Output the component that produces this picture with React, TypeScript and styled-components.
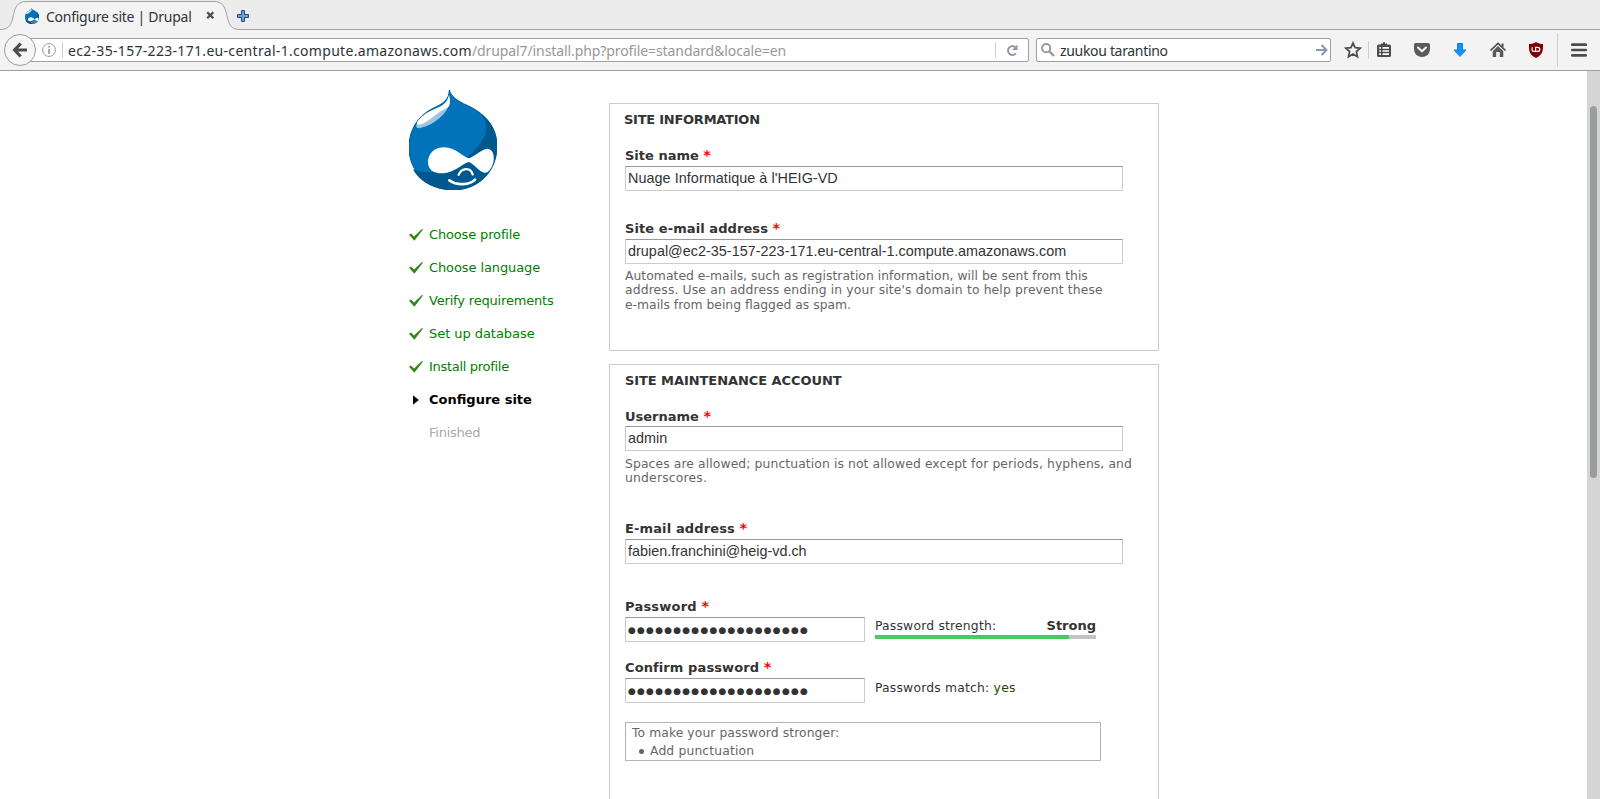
import React from "react";
import styled, { createGlobalStyle } from "styled-components";

const GlobalStyle = createGlobalStyle`
  * { box-sizing: border-box; }
  html, body { margin: 0; padding: 0; background: #fff; overflow: hidden; }
`;

const uiFont = `"Noto Sans", "Open Sans", sans-serif`;
const pageFont = `"DejaVu Sans", Verdana, sans-serif`;
const inputFont = `"Liberation Sans", Arial, sans-serif`;

const Window = styled.div`
  width: 1600px;
  height: 799px;
  display: flex;
  flex-direction: column;
  overflow: hidden;
  background: #fff;
`;

/* Browser chrome */
const TabStrip = styled.div`
  height: 30px;
  flex: none;
  display: flex;
  background: #ececec;
  box-shadow: inset 0 -1px 0 #9f9fa1;
`;
const Tab = styled.div`
  position: relative;
  width: 237px;
  height: 30px;
  display: flex;
  align-items: center;
  padding: 3px 0 0 25px;
  font: 14px/20px ${uiFont};
  color: #2e3436;
`;
const TabShape = styled.svg`
  position: absolute;
  left: 0;
  top: 0;
`;
const Favicon = styled.span`
  position: relative;
  display: flex;
  width: 14px;
  margin: -2px 7px 0 0;
`;
const TabTitle = styled.span<{ $track?: number }>`
  position: relative;
  width: 160px;
  white-space: nowrap;
  letter-spacing: ${(p) => p.$track ?? 0}px;
`;
const TabClose = styled.svg`
  position: relative;
  margin-top: -2px;
`;
const NewTab = styled.svg`
  margin-top: 10px;
`;

const NavBar = styled.div`
  height: 41px;
  flex: none;
  display: flex;
  align-items: center;
  background: #f3f3f3;
  border-bottom: 1px solid #9f9fa1;
  padding: 0 12px 0 4px;
`;
const BackButton = styled.div`
  position: relative;
  width: 32px;
  height: 32px;
  flex: none;
  display: flex;
  align-items: center;
  justify-content: center;
  border: 1px solid #9c9c9c;
  border-radius: 50%;
  background: #f6f6f6;
`;
const Field = styled.div<{ $w: number; $joined?: boolean }>`
  width: ${(p) => p.$w}px;
  height: 24px;
  flex: none;
  display: flex;
  align-items: center;
  margin-left: ${(p) => (p.$joined ? -8 : 7)}px;
  border: 1px solid #a0a0a2;
  border-radius: 2px;
  background: #fff;
  padding-left: ${(p) => (p.$joined ? 13 : 4)}px;
  font: 14px/22px ${uiFont};
  color: #2e3436;
`;
const FieldText = styled.span<{ $track: number }>`
  flex: 1;
  white-space: nowrap;
  padding-top: 2px;
  letter-spacing: ${(p) => p.$track}px;
`;
const Dim = styled.span<{ $track: number }>`
  color: #989898;
  letter-spacing: ${(p) => p.$track}px;
`;
const Rule = styled.i<{ $h: number; $l: number; $r: number }>`
  width: 1px;
  height: ${(p) => p.$h}px;
  flex: none;
  background: #d0d0d0;
  margin: 0 ${(p) => p.$r}px 0 ${(p) => p.$l}px;
`;
const FieldIcon = styled.svg<{ $after: number }>`
  flex: none;
  margin-right: ${(p) => p.$after}px;
`;
const Tools = styled.div`
  flex: 1;
  display: flex;
  align-items: center;
  padding-left: 13px;
`;
const ToolSlot = styled.span<{ $w: number }>`
  display: flex;
  width: ${(p) => p.$w}px;
  height: 18px;
  flex: none;
`;

/* Page */
const Viewport = styled.div`
  flex: 1;
  min-height: 0;
  display: flex;
  justify-content: space-between;
  font: 13px/20px ${pageFont};
  color: #333;
`;
const Page = styled.div`
  display: flex;
  padding-left: 409px;
`;
const Sidebar = styled.div`
  width: 200px;
  padding-top: 19px;
`;
const TaskList = styled.ul`
  list-style: none;
  margin: 28px 0 0;
  padding: 0;
`;
const Task = styled.li<{ $state: "done" | "active" | "todo"; $track: number }>`
  height: 33px;
  display: flex;
  align-items: center;
  white-space: nowrap;
  letter-spacing: ${(p) => p.$track}px;
  color: ${(p) => ({ done: "#008000", active: "#000", todo: "#aaa" })[p.$state]};
  font-weight: ${(p) => (p.$state === "active" ? 700 : 400)};
`;
const TaskMark = styled.span`
  display: flex;
  width: 20px;
  height: 14px;
  flex: none;
`;
const Main = styled.div`
  width: 550px;
  padding-top: 32px;
  height: 728px;
  overflow: hidden;
`;
const Fieldset = styled.section<{ $h: number }>`
  height: ${(p) => p.$h}px;
  margin-bottom: 13px;
  border: 1px solid #ccc;
  padding: 6px 15px 0;
`;
const Legend = styled.h2<{ $track: number; $shift?: number }>`
  margin: 0 0 16px ${(p) => p.$shift ?? 0}px;
  font: 700 13px/20px ${pageFont};
  text-transform: uppercase;
  white-space: nowrap;
  letter-spacing: ${(p) => p.$track}px;
`;
const FormItem = styled.div<{ $h: number }>`
  height: ${(p) => p.$h}px;
`;
const Label = styled.div<{ $track: number; $h: number }>`
  height: ${(p) => p.$h}px;
  font-weight: 700;
  white-space: nowrap;
  letter-spacing: ${(p) => p.$track}px;
`;
const Star = styled.span`
  color: #f00;
  font-size: 14.5px;
  line-height: 1;
`;
const Input = styled.div<{ $w?: number; $track: number }>`
  width: ${(p) => p.$w ?? 498}px;
  height: 25px;
  border: 1px solid #ccc;
  border-top-color: #999;
  padding-left: 2px;
  font: 14.4px/23px ${inputFont};
  color: #333;
  white-space: nowrap;
  letter-spacing: ${(p) => p.$track}px;
`;
const Dots = styled.span`
  display: block;
  font: 9px/24px ${pageFont};
  letter-spacing: 1.2px;
`;
const Description = styled.div<{ $top?: number }>`
  padding-top: ${(p) => p.$top ?? 5}px;
  font-size: 12.35px;
  line-height: 14.4px;
  color: #666;
`;
const Line = styled.div<{ $track: number }>`
  white-space: nowrap;
  letter-spacing: ${(p) => p.$track}px;
`;
const PasswordRow = styled.div`
  display: flex;
  gap: 10px;
`;
const Strength = styled.div`
  width: 221px;
  line-height: 18px;
`;
const StrengthText = styled.div`
  height: 18px;
  display: flex;
  justify-content: space-between;
  white-space: nowrap;
`;
const Text = styled.span<{ $track: number; $bold?: boolean; $green?: boolean }>`
  white-space: pre;
  letter-spacing: ${(p) => p.$track}px;
  font-weight: ${(p) => (p.$bold ? 700 : 400)};
  font-size: ${(p) => (p.$bold ? 13 : 12.35)}px;
  color: ${(p) => (p.$green ? "#234600" : "inherit")};
`;
const Meter = styled.div`
  height: 4px;
  background: #c4c4c4;
`;
const MeterFill = styled.div<{ $pct: number }>`
  width: ${(p) => p.$pct}%;
  height: 4px;
  background: #47c965;
`;
const Match = styled.div`
  display: flex;
  height: 20px;
  line-height: 20px;
`;
const Suggestions = styled.div`
  width: 476px;
  height: 39px;
  border: 1px solid #b4b4b4;
  padding: 1px 0 0 6px;
  font-size: 12.35px;
  line-height: 18px;
  color: #666;
`;
const SuggestionItem = styled.div<{ $track: number }>`
  display: flex;
  align-items: center;
  letter-spacing: ${(p) => p.$track}px;
  &::before {
    content: "";
    width: 5px;
    height: 5px;
    border-radius: 50%;
    background: #666;
    margin: 0 6px 0 7px;
  }
`;
const ScrollTrack = styled.div`
  width: 13px;
  background: #d5d5d5;
  padding: 35px 3px 0;
`;
const ScrollThumb = styled.div`
  height: 372px;
  border-radius: 4px;
  background: #9b9c9d;
`;

const LogoSvg = styled.svg`
  display: block;
`;
const DropLogo = ({ width, height }: { width: number; height: number }) => (
  <LogoSvg width={width} height={height} viewBox="42 30 264 300">
    <path d="M163 30 C168 50 188 63 216 76 C278 104 306 148 306 198 C306 275 250 330 174 330 C98 330 42 276 42 202 C42 150 68 108 112 86 C146 70 162 60 163 30Z" fill="#0073ba" />
    <path d="M256 100 C290 126 306 160 306 198 C306 275 250 330 174 330 C115 330 72 304 54 268 C72 277 92 276 118 276 C190 264 234 222 260 184 C280 154 278 124 256 100Z" fill="#00598e" />
    <path d="M163 30 C168 50 188 63 216 76 C278 104 306 148 306 198 C306 275 250 330 174 330 C98 330 42 276 42 202 C42 150 68 108 112 86 C146 70 162 60 163 30Z" fill="none" stroke="#00598e" strokeWidth="3" />
    <path d="M164 52 C170 92 122 132 84 142 C70 147 61 144 64 134 C76 106 104 94 126 84 C148 75 160 64 164 52Z" fill="#9cc6e2" />
    <path d="M162 44 C166 62 168 76 156 84 C124 96 106 124 78 133 C67 136 62 133 68 124 C82 103 104 94 126 84 C148 75 158 64 162 44Z" fill="#fff" />
    <path d="M99 246 C99 220 120 202 148 202 C180 202 202 229 221 235 C240 229 262 206 278 206 C294 208 298 226 296 242 C292 264 280 280 268 278 C252 276 238 252 222 246 C202 250 178 280 140 280 C114 280 99 268 99 246Z" fill="#fff" />
    <path d="M191 284 C200 264 226 260 233 283" fill="none" stroke="#fff" strokeWidth="7" strokeLinecap="round" />
    <path d="M163 301 C186 318 224 315 240 299" fill="none" stroke="#fff" strokeWidth="8" strokeLinecap="round" />
  </LogoSvg>
);

const Check = () => (
  <svg width="14" height="14" viewBox="0 0 14 14">
    <path d="M0 6.8 L2 5.6 L5 8.4 L13 1 L14 1.5 L5.4 12.8 Z" fill="#35851c" />
  </svg>
);
const Arrow = () => (
  <svg width="14" height="14" viewBox="0 0 14 14">
    <path d="M4 2.3 L9.8 7 L4 11.7Z" fill="#000" />
  </svg>
);

type TaskInfo = { name: string; state: "done" | "active" | "todo"; track: number };
const tasks: TaskInfo[] = [
  { name: "Choose profile", state: "done", track: -0.15 },
  { name: "Choose language", state: "done", track: -0.1 },
  { name: "Verify requirements", state: "done", track: -0.18 },
  { name: "Set up database", state: "done", track: -0.05 },
  { name: "Install profile", state: "done", track: -0.3 },
  { name: "Configure site", state: "active", track: 0 },
  { name: "Finished", state: "todo", track: -0.25 },
];

const Required = ({ children, track = 0, h = 20 }: { children: string; track?: number; h?: number }) => (
  <Label $track={track} $h={h}>
    {children} <Star>*</Star>
  </Label>
);

const mask = "●".repeat(20);

export default function App() {
  return (
    <Window>
      <GlobalStyle />
      <TabStrip>
        <Tab>
          <TabShape width="240" height="30">
            <path d="M0 29.5 C8 29.5 11 26 13 17 C15 7 17 1.5 27 1.5 H214 C222 1.5 225 6 227 16 C229 25 231 29.5 240 29.5 V30 H0Z" fill="#f3f3f3" />
            <path d="M0 29.5 C8 29.5 11 26 13 17 C15 7 17 1.5 27 1.5 H214 C222 1.5 225 6 227 16 C229 25 231 29.5 240 29.5" fill="none" stroke="#9f9fa1" />
          </TabShape>
          <Favicon><DropLogo width={14} height={16} /></Favicon>
          <TabTitle $track={-0.27}>Configure site | Drupal</TabTitle>
          <TabClose width="9" height="9" viewBox="0 0 9 9">
            <path d="M1.2 1.2 L7.3 7.3 M7.3 1.2 L1.2 7.3" stroke="#4b4f51" strokeWidth="2.3" />
          </TabClose>
        </Tab>
        <NewTab width="12" height="12" viewBox="0 0 12 12">
          <path d="M4.5 .5 H7.5 V4.5 H11.5 V7.5 H7.5 V11.5 H4.5 V7.5 H.5 V4.5 H4.5Z" fill="#6f9ad8" stroke="#26498f" />
        </NewTab>
      </TabStrip>

      <NavBar>
        <BackButton>
          <svg width="16" height="16" viewBox="0 0 16 16">
            <path d="M8.7 1.5 L2.6 8 L8.7 14.5 M3 8 H15" fill="none" stroke="#4c4c4c" strokeWidth="3.2" />
          </svg>
        </BackButton>
        <Field $w={1001} $joined>
          <FieldIcon $after={0} width="14" height="14" viewBox="0 0 14 14">
            <circle cx="7" cy="7" r="6.4" fill="none" stroke="#989898" />
            <path d="M7 3 V4.6 M7 6 V11" stroke="#989898" strokeWidth="1.7" />
          </FieldIcon>
          <Rule $h={16} $l={6} $r={5} />
          <FieldText $track={0.31}>
            ec2-35-157-223-171.eu-central-1.compute.amazonaws.com<Dim $track={-0.095}>/drupal7/install.php?profile=standard&amp;locale=en</Dim>
          </FieldText>
          <Rule $h={16} $l={0} $r={10} />
          <FieldIcon $after={9} width="13" height="13" viewBox="0 0 13 13">
            <path d="M9.9 9.3 A4.4 4.4 0 1 1 9.2 3.1" fill="none" stroke="#8997a8" strokeWidth="2" />
            <path d="M11.5 .6 V6 H6.1Z" fill="#8997a8" />
          </FieldIcon>
        </Field>
        <Field $w={295}>
          <FieldIcon $after={5} width="14" height="14" viewBox="0 0 14 14">
            <circle cx="5.2" cy="5.2" r="4.1" fill="none" stroke="#989898" strokeWidth="2" />
            <path d="M8.3 8.3 L13 13" stroke="#989898" strokeWidth="2.4" />
          </FieldIcon>
          <FieldText $track={-0.32}>zuukou tarantino</FieldText>
          <FieldIcon $after={2} width="12" height="12" viewBox="0 0 12 12">
            <path d="M0 6 H10 M5.6 1 L10.4 6 L5.6 11" fill="none" stroke="#8997a8" strokeWidth="2" />
          </FieldIcon>
        </Field>
        <Tools>
          <ToolSlot $w={24}>
            <svg width="18" height="18" viewBox="0 0 18 18">
              <path d="M9 2 L11.1 6.7 L16.2 7.2 L12.4 10.6 L13.5 15.8 L9 13.1 L4.5 15.8 L5.6 10.6 L1.8 7.2 L6.9 6.7Z" fill="none" stroke="#4c4c4c" strokeWidth="1.7" />
            </svg>
          </ToolSlot>
          <Rule $h={18} $l={0} $r={6} />
          <ToolSlot $w={38}>
            <svg width="18" height="18" viewBox="0 0 18 18">
              <path d="M6 3.5 V2.5 H8 V1.2 H10 V2.5 H12 V3.5 H14.5 Q16 3.5 16 5 V14.6 Q16 16 14.5 16 H3.5 Q2 16 2 14.6 V5 Q2 3.5 3.5 3.5Z" fill="#4c4c4c" />
              <path d="M4.2 6.9 H6 M7.5 6.9 H14 M4.2 10 H6 M7.5 10 H14 M4.2 13.1 H6 M7.5 13.1 H14" stroke="#fff" strokeWidth="1.6" />
            </svg>
          </ToolSlot>
          <ToolSlot $w={38}>
            <svg width="18" height="18" viewBox="0 0 18 18">
              <path d="M2.5 2 H15.5 Q17 2 17 3.5 V8 C17 13 13 16 9 16 C5 16 1 13 1 8 V3.5 Q1 2 2.5 2Z" fill="#5a5a5a" />
              <path d="M5 6.5 L9 10.3 L13 6.5" fill="none" stroke="#f3f3f3" strokeWidth="2.1" strokeLinecap="round" strokeLinejoin="round" />
            </svg>
          </ToolSlot>
          <ToolSlot $w={38}>
            <svg width="18" height="18" viewBox="0 0 18 18">
              <path d="M6.5 2.5 H11.5 V9 H15 L9 15.4 L3 9 H6.5Z" fill="#1192fa" stroke="#0a84ea" />
            </svg>
          </ToolSlot>
          <ToolSlot $w={38}>
            <svg width="18" height="18" viewBox="0 0 18 18">
              <path d="M1.5 9.5 L9 2.4 L16.5 9.5" fill="none" stroke="#4c4c4c" strokeWidth="1.7" />
              <path d="M12.5 2.5 H14.5 V6.5 L12.5 5Z" fill="#4c4c4c" />
              <path d="M3.7 10.2 L9 5 L14.3 10.2 V16 H10.8 V11 H7.2 V16 H3.7Z" fill="#5a5a5a" />
            </svg>
          </ToolSlot>
          <ToolSlot $w={29}>
            <svg width="18" height="18" viewBox="0 0 18 18">
              <path d="M9 1 C11 2.5 13.5 3 16 3 C16.3 10 15.5 14 9 17 C2.5 14 1.7 10 2 3 C4.5 3 7 2.5 9 1Z" fill="#800000" />
              <path d="M5.1 6.2 V9 Q5.1 10.4 6.6 10.4 H8.6 V6.4 H10.6 Q12.8 6.4 12.8 8.4 Q12.8 10.4 10.6 10.4 H8.6" fill="none" stroke="#fff" strokeWidth="1.2" />
            </svg>
          </ToolSlot>
          <Rule $h={34} $l={1} $r={13} />
          <svg width="16" height="14" viewBox="0 0 16 14">
            <path d="M1.3 1.7 H14.7 M1.3 7 H14.7 M1.3 12.3 H14.7" stroke="#4c4c4c" strokeWidth="2.7" strokeLinecap="round" />
          </svg>
        </Tools>
      </NavBar>

      <Viewport>
        <Page>
          <Sidebar>
            <DropLogo width={88} height={100} />
            <TaskList>
              {tasks.map((t) => (
                <Task key={t.name} $state={t.state} $track={t.track}>
                  <TaskMark>
                    {t.state === "done" && <Check />}
                    {t.state === "active" && <Arrow />}
                  </TaskMark>
                  {t.name}
                </Task>
              ))}
            </TaskList>
          </Sidebar>
          <Main>
            <Fieldset $h={248}>
              <Legend $track={-0.25} $shift={-1}>Site information</Legend>
              <FormItem $h={73}>
                <Required>Site name</Required>
                <Input $track={0.05}>Nuage Informatique à l'HEIG-VD</Input>
              </FormItem>
              <FormItem $h={100}>
                <Required track={0.08}>Site e-mail address</Required>
                <Input $track={0.02}>drupal@ec2-35-157-223-171.eu-central-1.compute.amazonaws.com</Input>
                <Description>
                  <Line $track={0.043}>Automated e-mails, such as registration information, will be sent from this</Line>
                  <Line $track={0.142}>address. Use an address ending in your site's domain to help prevent these</Line>
                  <Line $track={0}>e-mails from being flagged as spam.</Line>
                </Description>
              </FormItem>
            </Fieldset>
            <Fieldset $h={500}>
              <Legend $track={-0.07}>Site maintenance account</Legend>
              <FormItem $h={112}>
                <Required h={19}>Username</Required>
                <Input $track={0}>admin</Input>
                <Description $top={6}>
                  <Line $track={0.107}>Spaces are allowed; punctuation is not allowed except for periods, hyphens, and</Line>
                  <Line $track={0.2}>underscores.</Line>
                </Description>
              </FormItem>
              <FormItem $h={78}>
                <Required track={0.13}>E-mail address</Required>
                <Input $track={0}>fabien.franchini@heig-vd.ch</Input>
              </FormItem>
              <FormItem $h={61}>
                <Required track={0.22}>Password</Required>
                <PasswordRow>
                  <Input $w={240} $track={0}><Dots>{mask}</Dots></Input>
                  <Strength>
                    <StrengthText>
                      <Text $track={0.2}>Password strength:</Text>
                      <Text $track={0} $bold>Strong</Text>
                    </StrengthText>
                    <Meter><MeterFill $pct={87.8} /></Meter>
                  </Strength>
                </PasswordRow>
              </FormItem>
              <FormItem $h={64}>
                <Required track={0.1}>Confirm password</Required>
                <PasswordRow>
                  <Input $w={240} $track={0}><Dots>{mask}</Dots></Input>
                  <Match>
                    <Text $track={0.2}>{"Passwords match: "}</Text>
                    <Text $track={0.3} $green>yes</Text>
                  </Match>
                </PasswordRow>
              </FormItem>
              <Suggestions>
                <Line $track={0.08}>To make your password stronger:</Line>
                <SuggestionItem $track={0.15}>Add punctuation</SuggestionItem>
              </Suggestions>
            </Fieldset>
          </Main>
        </Page>
        <ScrollTrack>
          <ScrollThumb />
        </ScrollTrack>
      </Viewport>
    </Window>
  );
}
